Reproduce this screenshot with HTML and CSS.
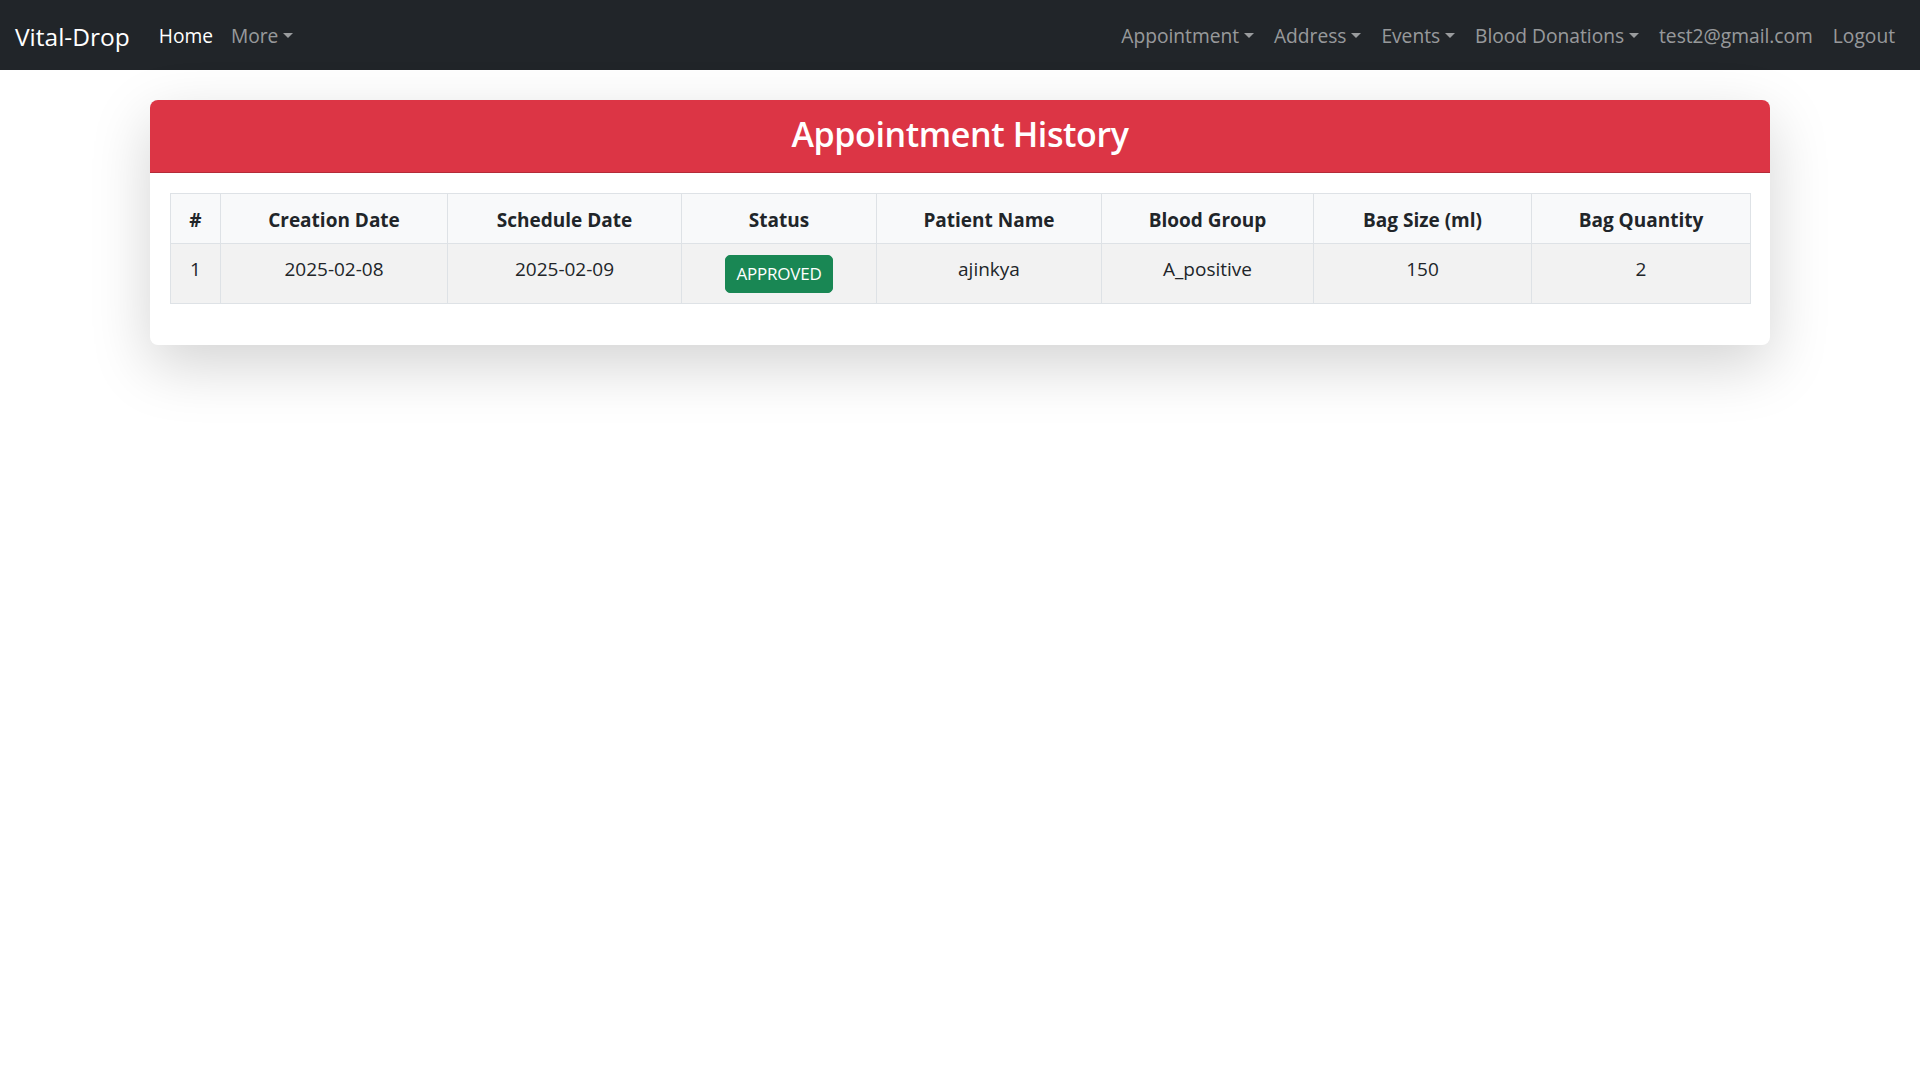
FILE: index.html
```html
<!DOCTYPE html>
<html lang="en">
<head>
<meta charset="utf-8">
<title>Appointment History</title>
<link rel="stylesheet" href="styles.css">
</head>
<body>
<nav class="navbar">
  <div class="nav-left">
    <span class="brand">Vital-Drop</span>
    <span class="nav-link active">Home</span>
    <span class="nav-link dropdown">More</span>
  </div>
  <div class="nav-right">
    <span class="nav-link dropdown">Appointment</span>
    <span class="nav-link dropdown">Address</span>
    <span class="nav-link dropdown">Events</span>
    <span class="nav-link dropdown">Blood Donations</span>
    <span class="nav-link">test2@gmail.com</span>
    <span class="nav-link">Logout</span>
  </div>
</nav>
<main class="page">
  <section class="card">
    <header class="card-header">
      <h2 class="card-title">Appointment History</h2>
    </header>
    <div class="card-body">
      <table class="table">
        <colgroup>
          <col class="c1"><col class="c2"><col class="c3"><col class="c4">
          <col class="c5"><col class="c6"><col class="c7"><col class="c8">
        </colgroup>
        <thead>
          <tr>
            <th>#</th>
            <th>Creation Date</th>
            <th>Schedule Date</th>
            <th>Status</th>
            <th>Patient Name</th>
            <th>Blood Group</th>
            <th>Bag Size (ml)</th>
            <th>Bag Quantity</th>
          </tr>
        </thead>
        <tbody>
          <tr>
            <td>1</td>
            <td>2025-02-08</td>
            <td>2025-02-09</td>
            <td><span class="badge">APPROVED</span></td>
            <td>ajinkya</td>
            <td>A_positive</td>
            <td>150</td>
            <td>2</td>
          </tr>
        </tbody>
      </table>
    </div>
  </section>
</main>
</body>
</html>
```
FILE: styles.css
```css
* { box-sizing: border-box; }
html, body { margin: 0; padding: 0; }
body {
  font-family: "Open Sans", "Noto Sans", sans-serif;
  font-size: 20px;
  line-height: 1.5;
  color: #212529;
  background: #fff;
  min-height: 100vh;
}
.navbar {
  height: 70px;
  background: #212529;
  display: flex;
  align-items: center;
  justify-content: space-between;
  padding: 2px 15px 0;
}
.nav-left, .nav-right {
  display: flex;
  align-items: center;
}
.brand {
  color: #fff;
  font-size: 24.5px;
  line-height: 37px;
  margin-right: 20px;
}
.nav-link {
  color: rgba(255, 255, 255, 0.55);
  padding: 10px 10px;
  font-size: 19.2px;
  line-height: 30px;
}
.nav-left .nav-link { padding: 10px 9px; }
.nav-link.active { color: #fff; }
.dropdown::after {
  content: "";
  display: inline-block;
  margin-left: 0.255em;
  vertical-align: 0.255em;
  border-top: 0.3em solid;
  border-right: 0.3em solid transparent;
  border-left: 0.3em solid transparent;
}
.page {
  padding: 30px 150px;
}
.card {
  background: #fff;
  border-radius: 8px;
  box-shadow: 0 20px 60px rgba(0, 0, 0, 0.175);
}
.card-header {
  background: #dc3545;
  border-radius: 8px 8px 0 0;
  border-bottom: 1px solid rgba(0, 0, 0, 0.18);
  padding: 10px 20px 14px;
  text-align: center;
}
.card-title {
  margin: 0;
  color: #fff;
  font-size: 34px;
  font-weight: 600;
  line-height: 48px;
  letter-spacing: -0.4px;
}
.card-body {
  padding: 20px 20px 41px;
}
.table {
  width: 100%;
  border-collapse: collapse;
  table-layout: fixed;
  text-align: center;
}
.c1 { width: 50px; }
.c2 { width: 227px; }
.c3 { width: 234px; }
.c4 { width: 195px; }
.c5 { width: 225px; }
.c6 { width: 212px; }
.c7 { width: 218px; }
.c8 { width: 219px; }
.table th, .table td {
  border: 1px solid #dee2e6;
  vertical-align: top;
}
.table th {
  padding: 12px 10px 8px;
  background: #f8f9fa;
  font-weight: 700;
  font-size: 19px;
}
.table td {
  padding: 11px 10px 10px;
  background: #f2f2f2;
  font-size: 19px;
}
.badge {
  display: inline-block;
  background: #198754;
  color: #fff;
  font-size: 17px;
  line-height: 26px;
  padding: 5px 10px;
  border-radius: 5px;
  border: 1px solid #198754;
  vertical-align: top;
  letter-spacing: -0.2px;
}
```
